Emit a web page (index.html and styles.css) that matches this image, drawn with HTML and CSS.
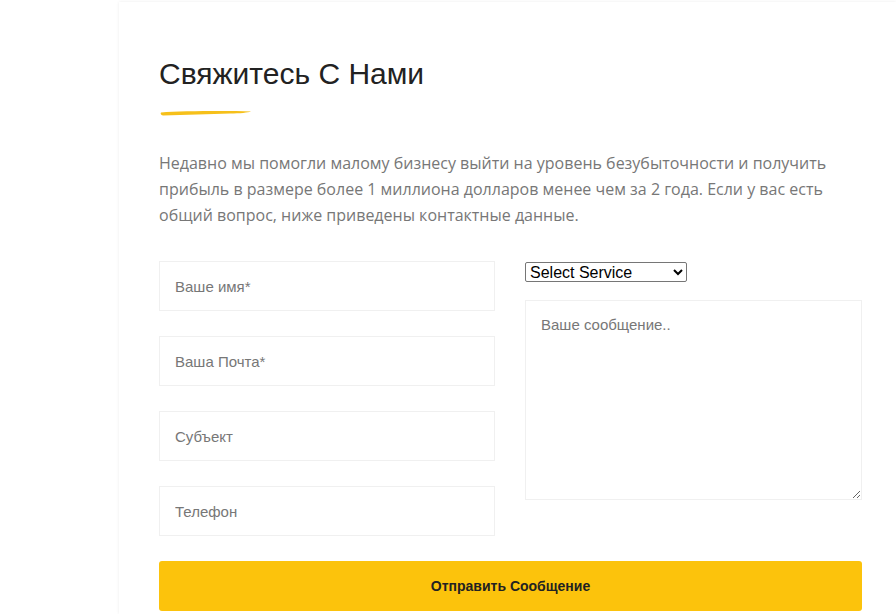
FILE: index.html
```html
<!DOCTYPE html>
<html lang="ru">
<head>
    <meta charset="UTF-8">
    <meta name="viewport" content="width=device-width, initial-scale=1.0">
    <title>Свяжитесь С Нами</title>
    <link rel="stylesheet" href="styles.css">
</head>
<body>

<div class="contact-card">
    <h2 class="contact-title">Свяжитесь С Нами</h2>
    <svg class="brush" width="92" height="6" viewBox="0 0 92 6">
        <path d="M1 2.4 C20 1.2 60 0.8 91 1.4 C88 2.6 80 3.2 70 3.6 C50 4.4 25 5 3 5.4 C0.5 5 0.3 3 1 2.4 Z" fill="#f6c01a"/>
    </svg>
    <p class="contact-text">Недавно мы помогли малому бизнесу выйти на уровень безубыточности и получить прибыль в размере более 1 миллиона долларов менее чем за 2 года. Если у вас есть общий вопрос, ниже приведены контактные данные.</p>

    <form class="contact-form">
        <div class="form-col">
            <input type="text" placeholder="Ваше имя*">
            <input type="email" placeholder="Ваша Почта*">
            <input type="text" placeholder="Субъект">
            <input type="text" placeholder="Телефон">
        </div>
        <div class="form-col">
            <select class="service">
                <option>Select Service</option>
                <option>Консультация</option>
            </select>
            <textarea placeholder="Ваше сообщение.."></textarea>
        </div>
        <button type="button" class="send-btn">Отправить Сообщение</button>
    </form>
</div>

</body>
</html>
```

FILE: styles.css
```css
html, body {
    overflow: hidden;
}
body {
    margin: 0;
    padding: 0;
    background-color: #fff;
}
.contact-card {
    margin: 2px 0 0 119px;
    padding: 50px 34px 3px 40px;
    background-color: #fff;
    box-shadow: 0 0 3px rgba(0, 0, 0, 0.08);
}
.contact-title {
    margin: 0;
    font-family: "Liberation Sans", Arial, sans-serif;
    font-weight: normal;
    font-size: 30px;
    line-height: 44px;
    color: #222;
}
.brush {
    display: block;
    margin: 14px 0 0 1px;
}
.contact-text {
    margin: 34px 0 0;
    font-family: "Open Sans", sans-serif;
    font-size: 16px;
    line-height: 26px;
    color: #777;
    width: 690px;
}
.contact-form {
    display: grid;
    grid-template-columns: 336px 337px;
    column-gap: 30px;
    margin-top: 33px;
}
.form-col {
    display: flex;
    flex-direction: column;
}
.form-col input {
    height: 50px;
    margin-bottom: 25px;
    padding: 0 15px;
    border: 1px solid #f0f0f0;
    box-sizing: border-box;
    font-family: "Liberation Sans", Arial, sans-serif;
    font-size: 15px;
    color: #333;
    outline: none;
}
.form-col input::placeholder,
.form-col textarea::placeholder {
    color: #777;
}
.service {
    align-self: flex-start;
    width: 162px;
    height: 20px;
    margin-top: 1px;
    font-family: "Liberation Sans", Arial, sans-serif;
    font-size: 16px;
    color: #000;
    border: 1px solid #767676;
    border-radius: 2px;
    background-color: #fff;
    padding: 0;
}
.form-col textarea {
    height: 200px;
    margin-top: 18px;
    padding: 15px;
    border: 1px solid #f0f0f0;
    box-sizing: border-box;
    font-family: "Liberation Sans", Arial, sans-serif;
    font-size: 15px;
    outline: none;
}
.send-btn {
    grid-column: 1 / 3;
    height: 50px;
    background-color: #fcc30c;
    border: none;
    border-radius: 3px;
    font-family: "Liberation Sans", Arial, sans-serif;
    font-weight: bold;
    font-size: 14px;
    color: #222;
    cursor: pointer;
}
```
